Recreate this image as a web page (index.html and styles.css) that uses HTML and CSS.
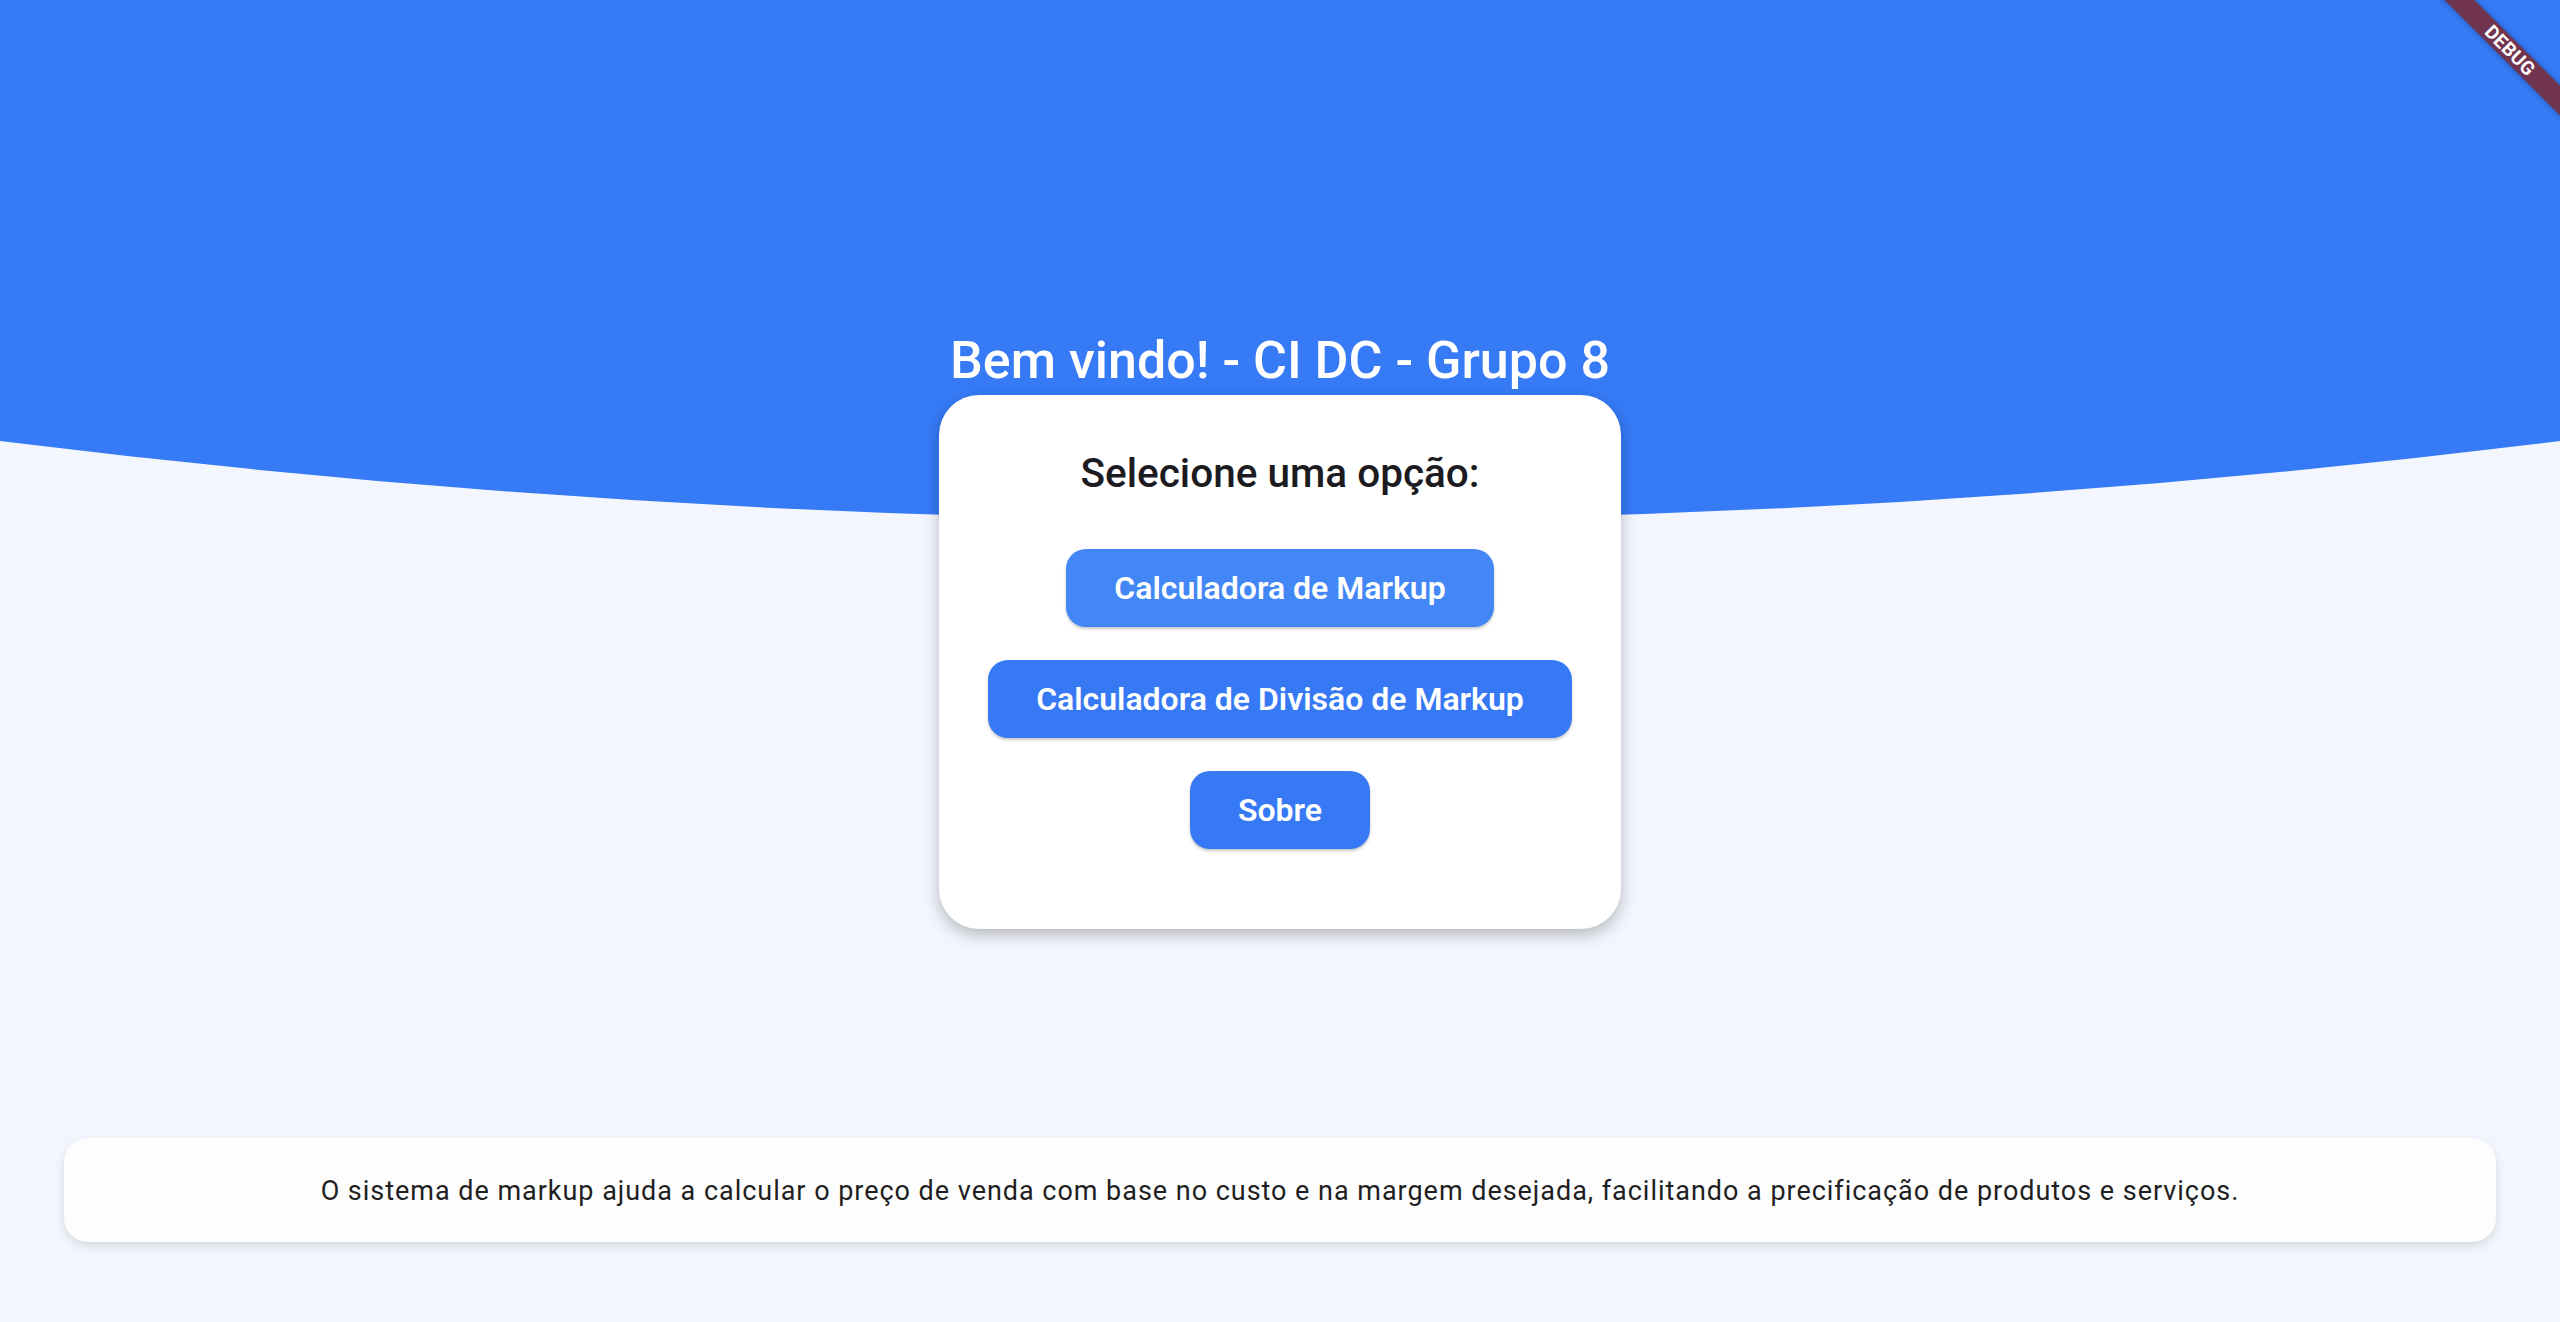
FILE: index.html
```html
<!DOCTYPE html>
<html lang="pt">
<head>
<meta charset="utf-8">
<title>Markup - Grupo 8</title>
<link rel="stylesheet" href="styles.css">
</head>
<body>
<div class="page">
  <svg class="header-bg" viewBox="0 0 2560 600" preserveAspectRatio="none" aria-hidden="true">
    <path d="M0 0 H2560 V441 Q1280 600 0 441 Z" fill="#367AF6"/>
  </svg>
  <div class="debug-banner"><span>DEBUG</span></div>
  <main class="main">
    <h1 class="title">Bem vindo! - CI DC - Grupo 8</h1>
    <section class="card">
      <h2 class="card-title">Selecione uma opção:</h2>
      <div class="buttons">
        <button class="btn btn-hover">Calculadora de Markup</button>
        <button class="btn">Calculadora de Divisão de Markup</button>
        <button class="btn">Sobre</button>
      </div>
    </section>
    <div class="spacer"></div>
    <footer class="info">
      <p>O sistema de markup ajuda a calcular o preço de venda com base no custo e na margem desejada, facilitando a precificação de produtos e serviços.</p>
    </footer>
  </main>
</div>
</body>
</html>
```
FILE: styles.css
```css
* { box-sizing: border-box; }
html, body {
  margin: 0;
  padding: 0;
}
body {
  background: #F3F6FD;
  font-family: Roboto, "Noto Sans", "Liberation Sans", sans-serif;
  overflow: hidden;
}
.page {
  position: relative;
  width: 100%;
  height: 1322px;
  overflow: hidden;
}
.header-bg {
  position: absolute;
  left: 0;
  top: 0;
  width: 100%;
  height: 600px;
  display: block;
}
.debug-banner {
  position: absolute;
  top: 40px;
  right: -50px;
  width: 200px;
  height: 21px;
  background: #70344F;
  transform: rotate(45deg);
  box-shadow: 0 0 6px rgba(0,0,0,0.35);
  display: flex;
  align-items: center;
  justify-content: center;
  z-index: 5;
}
.debug-banner span {
  color: #fff;
  font-family: Roboto, "Liberation Sans", sans-serif;
  font-weight: 700;
  font-size: 19px;
  line-height: 21px;
  letter-spacing: 0.3px;
}
.main {
  position: relative;
  display: flex;
  flex-direction: column;
  align-items: center;
  height: 100%;
  padding-top: 331px;
}
.title {
  margin: 0;
  color: #fff;
  font-size: 52px;
  font-weight: 500;
  line-height: 60px;
  height: 60px;
}
.card {
  margin-top: 4px;
  width: 682px;
  background: #fff;
  border-radius: 40px;
  box-shadow: 0 6px 16px rgba(0,0,0,0.25);
  padding: 53px 0 80px;
  display: flex;
  flex-direction: column;
  align-items: center;
}
.card-title {
  margin: 0;
  font-size: 40.5px;
  font-weight: 500;
  line-height: 50px;
  color: #1C1B1F;
}
.buttons {
  margin-top: 51px;
  display: flex;
  flex-direction: column;
  align-items: center;
  gap: 33px;
}
.btn {
  height: 78px;
  padding: 0 48px;
  border: none;
  border-radius: 20px;
  background: #3779F5;
  color: #fff;
  font-family: Roboto, "Liberation Sans", sans-serif;
  font-size: 32px;
  font-weight: 600;
  box-shadow: 0 2px 3px rgba(0,0,0,0.22);
  display: flex;
  align-items: center;
  justify-content: center;
}
.btn-hover {
  background: #4387F6;
}
.spacer {
  flex: 1;
}
.info {
  align-self: stretch;
  margin: 0 64px 80px;
  height: 104px;
  background: #FDFDFE;
  border-radius: 24px;
  box-shadow: 0 4px 10px rgba(0,0,0,0.12);
  display: flex;
  align-items: center;
  justify-content: center;
  padding-top: 2px;
}
.info p {
  margin: 0;
  font-size: 27px;
  letter-spacing: 0.97px;
  color: #1F1F22;
}
```
